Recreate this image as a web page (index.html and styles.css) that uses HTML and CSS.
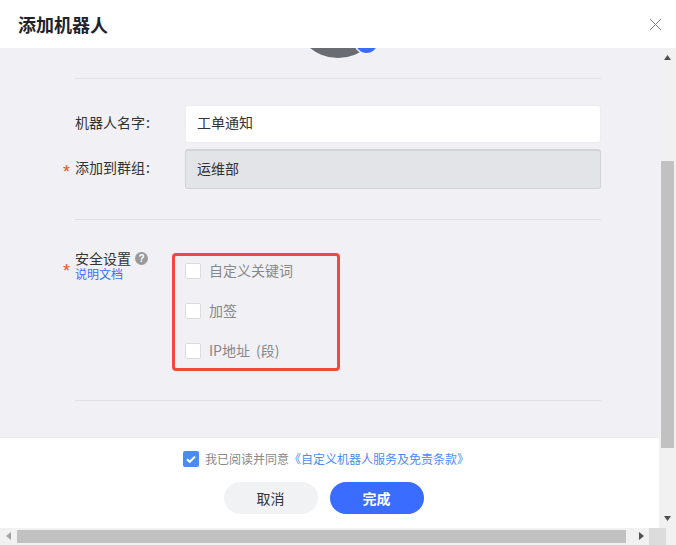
FILE: index.html
```html
<!DOCTYPE html>
<html lang="zh">
<head>
<meta charset="utf-8">
<title>添加机器人</title>
<link rel="stylesheet" href="styles.css">
</head>
<body>
<div class="window">
  <header class="header">
    <h1 class="title">添加机器人</h1>
    <svg class="close" width="13" height="13" viewBox="0 0 13 13"><path d="M1 1l11 11M12 1L1 12" stroke="#808080" stroke-width="1" fill="none"/></svg>
  </header>
  <div class="middle">
    <div class="column">
      <main class="body">
        <div class="avatar-wrap">
          <svg class="avatar" width="100" height="10" viewBox="0 0 100 10">
            <circle cx="50" cy="-34" r="44" fill="#696d73"/>
            <circle cx="78.500" cy="-6" r="12.500" fill="#f5f5f8"/>
            <circle cx="78.500" cy="-6" r="11" fill="#3a6cff"/>
          </svg>
        </div>
        <div class="form-top">
          <div class="field field-name">
            <label class="label">机器人名字<span class="colon">:</span></label>
            <div class="input"><span class="lift">工单通知</span></div>
          </div>
          <div class="field field-group">
            <label class="label"><span class="star">*</span>添加到群组<span class="colon">:</span></label>
            <div class="input input-disabled"><span class="lift">运维部</span></div>
          </div>
        </div>
        <div class="security">
          <div class="sec-label">
            <span class="star star-sec">*</span>
            <div class="sec-title">安全设置<span class="help">?</span></div>
            <a class="doc-link">说明文档</a>
          </div>
          <div class="options">
            <div class="option"><span class="box"></span><span class="opt-text">自定义关键词</span></div>
            <div class="option"><span class="box"></span><span class="opt-text">加签</span></div>
            <div class="option"><span class="box"></span><span class="opt-text">IP地址 (段)</span></div>
          </div>
        </div>
        <div class="rule-end"></div>
      </main>
      <footer class="footer">
        <div class="agree">
          <span class="checked"><svg width="16" height="16" viewBox="0 0 16 16"><path d="M4 8.200l2.800 2.600L12 5.600" stroke="#fff" stroke-width="2" fill="none"/></svg></span>
          <span class="agree-text">我已阅读并同意</span><a class="terms">《自定义机器人服务及免责条款》</a>
        </div>
        <div class="actions">
          <button class="btn btn-cancel">取消</button>
          <button class="btn btn-done">完成</button>
        </div>
      </footer>
    </div>
    <div class="vbar">
      <svg class="arrow-v" width="9" height="5" viewBox="0 0 9 5"><path d="M4.500 0L8 5H1z" fill="#505050"/></svg>
      <div class="vtrack"><div class="vthumb"></div></div>
      <svg class="arrow-v" width="9" height="5" viewBox="0 0 9 5"><path d="M1 0h7L4.500 5z" fill="#505050"/></svg>
    </div>
  </div>
  <div class="hbar">
    <svg class="arrow-h" width="5" height="9" viewBox="0 0 5 9"><path d="M5 0v8L0 4z" fill="#a3a3a3"/></svg>
    <div class="htrack"><div class="hthumb"></div></div>
    <svg class="arrow-h" width="5" height="9" viewBox="0 0 5 9"><path d="M0 0l5 4-5 4z" fill="#505050"/></svg>
    <div class="corner"></div>
  </div>
</div>
</body>
</html>
```

FILE: styles.css
```css
* { box-sizing: border-box; }
html, body { margin: 0; padding: 0; overflow: hidden; }
body { font-family: "Noto Sans CJK SC", "Liberation Sans", sans-serif; font-size: 14px; color: #333; }
.window { width: 676px; height: 545px; display: flex; flex-direction: column; background: #fff; }

.header { height: 48px; flex: none; display: flex; align-items: center; justify-content: space-between; padding: 0 14px 0 18px; background: #fff; }
.title { margin: 0; font-size: 18px; line-height: 48px; font-weight: 700; color: #1f2329; }
.close { display: block; margin-top: 1px; }

.middle { flex: 1; min-height: 0; display: flex; }
.column { flex: 1; min-width: 0; display: flex; flex-direction: column; }

.body { flex: 1; min-height: 0; background: #f0f0f5; padding: 0 58px 0 75px; display: flex; flex-direction: column; }
.avatar-wrap { height: 31px; border-bottom: 1px solid #e0e0e6; }
.avatar { display: block; margin-left: 213px; }

.form-top { height: 141px; border-bottom: 1px solid #e0e0e6; padding-top: 26px; }
.field { display: flex; align-items: center; }
.field-name { height: 38px; }
.field-group { height: 40px; margin-top: 6px; }
.label { width: 110px; flex: none; position: relative; color: #333; line-height: 20px; padding-bottom: 4px; }
.colon { margin-left: 1px; }
.star { position: absolute; left: -12px; top: 5px; color: #f0501e; font: 18px/20px "Liberation Sans", sans-serif; }
.input { flex: 1; height: 100%; display: flex; align-items: center; padding-left: 11px; background: #fff; border: 1px solid #ececf1; border-radius: 3px; color: #333; }
.lift { padding-bottom: 4px; }
.input-disabled { background: #e3e4e8; border: 1px solid #d2d3d8; border-top-width: 2px; }

.security { height: 181px; border-bottom: 1px solid #e0e0e6; padding-top: 33px; display: flex; }
.sec-label { width: 97px; height: 32px; flex: none; position: relative; margin-top: -2px; }
.star-sec { top: 10px; }
.sec-title { line-height: 14px; color: #333; display: flex; align-items: center; }
.help { width: 13px; height: 13px; margin-left: 4px; border-radius: 50%; background: #9a9a9a; color: #fff; font: 700 10px/13px "Liberation Sans", sans-serif; text-align: center; }
.doc-link { display: block; font-size: 12px; line-height: 15px; margin-top: 1px; color: #3a6cff; }
.options { width: 168px; height: 118px; border: 3px solid #f0493e; border-radius: 4px; padding: 0 0 2px 10px; display: flex; flex-direction: column; justify-content: center; gap: 20px; color: #888; }
.option { display: flex; align-items: center; height: 20px; }
.box { width: 16px; height: 16px; margin-right: 8px; background: #fff; border: 1px solid #dcdcdc; border-radius: 2px; }
.opt-text { padding-bottom: 2px; word-spacing: 3px; }
.rule-end { flex: 1; }

.footer { height: 91px; flex: none; background: #fff; border-top: 1px solid #eaeaef; display: flex; flex-direction: column; align-items: center; padding: 13px 0 0; }
.agree { display: flex; align-items: center; height: 16px; font-size: 12px; color: #888; margin-left: -7px; padding-bottom: 0; }
.agree-text, .terms { padding-bottom: 2px; }
.checked { width: 16px; height: 16px; background: #4a8cf7; border-radius: 2px; margin-right: 6px; display: block; }
.checked svg { display: block; }
.terms { color: #4a8cf7; }
.actions { display: flex; gap: 12px; margin-top: 15px; margin-right: 12px; }
.btn { width: 94px; height: 32px; border: 0; border-radius: 16px; font-family: inherit; font-size: 14px; padding: 0; }
.btn-cancel { background: #f1f2f4; color: #333; }
.btn-done { background: #3a6cff; color: #fff; font-weight: 700; }

.vbar { width: 17px; flex: none; background: #f1f1f1; display: flex; flex-direction: column; align-items: center; padding: 7px 0; }
.arrow-v { display: block; flex: none; }
.vtrack { flex: 1; width: 100%; padding: 101px 2px 68px; }
.vthumb { height: 100%; background: #c1c1c1; }

.hbar { height: 17px; flex: none; background: #f1f1f1; display: flex; align-items: center; padding-left: 6px; }
.arrow-h { display: block; flex: none; }
.htrack { width: 628px; height: 100%; padding: 2px 0 2px 6px; }
.hthumb { width: 609px; height: 100%; background: #c1c1c1; }
.corner { width: 17px; height: 100%; margin-left: 5px; background: #dcdcdc; }
```
